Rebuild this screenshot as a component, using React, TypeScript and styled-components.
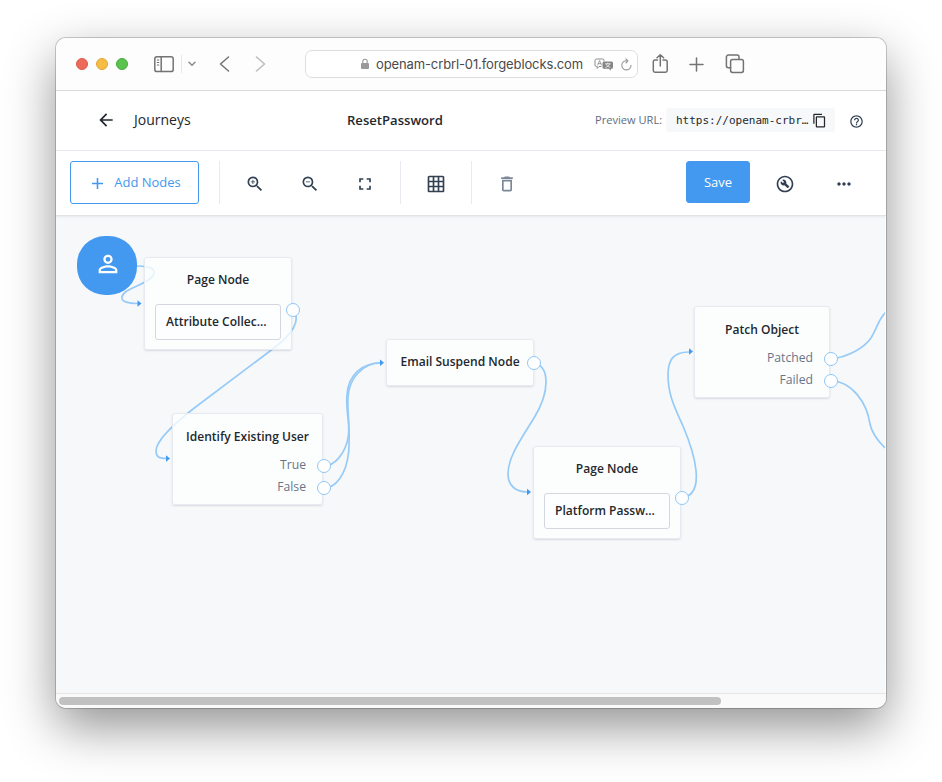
import React from 'react';
import styled, { createGlobalStyle } from 'styled-components';
import {
  MdAdd, MdArrowBack, MdContentCopy, MdDeleteOutline, MdFullscreen, MdGridOn,
  MdHelpOutline, MdMoreHoriz, MdOutlineBuildCircle, MdPersonOutline, MdZoomIn, MdZoomOut,
} from 'react-icons/md';

const GlobalStyle = createGlobalStyle`
  * { box-sizing: border-box; }
  html, body { margin: 0; background: #fff; }
  body { overflow: hidden; font-family: "Open Sans", "Noto Sans", sans-serif; color: #23282e; }
`;

const Desktop = styled.div`
  width: 942px;
  height: 782px;
  padding: 38px 56px 74px;
`;

const BrowserWindow = styled.main`
  display: flex;
  flex-direction: column;
  width: 830px;
  height: 670px;
  border-radius: 10px;
  overflow: hidden;
  background: #fff;
  box-shadow: 0 0 0 1px rgba(0, 0, 0, 0.19), 0 19px 50px rgba(0, 0, 0, 0.43);
`;

const TitleBar = styled.div`
  display: flex;
  align-items: center;
  flex: 0 0 53px;
  padding-left: 20px;
  background: #fdfdfd;
  border-bottom: 1px solid #d9d9d9;
`;

const Lights = styled.div`
  display: flex;
  gap: 8px;
  width: 78px;
`;

const Light = styled.span<{ $fill: string; $edge: string }>`
  width: 12px;
  height: 12px;
  border-radius: 50%;
  background: ${p => p.$fill};
  border: 1px solid ${p => p.$edge};
`;

const Glyph = styled.svg<{ $gap?: number; $color?: string }>`
  display: block;
  flex: none;
  margin-left: ${p => p.$gap ?? 0}px;
  fill: none;
  stroke: ${p => p.$color ?? '#737373'};
  stroke-width: 1.5;
  stroke-linecap: round;
  stroke-linejoin: round;
`;

const BarRule = styled.span`
  width: 1px;
  height: 18px;
  margin-left: 7px;
  background: #e9e9e9;
`;

const AddressField = styled.div`
  display: flex;
  align-items: center;
  width: 333px;
  height: 28px;
  margin-left: 39px;
  padding-left: 54px;
  border: 1px solid #dedede;
  border-radius: 7px;
  background: #fff;
`;

const Address = styled.span`
  width: 207px;
  margin-left: 6px;
  font: 13px/16px Inter, sans-serif;
  letter-spacing: -0.12px;
  color: #4a4a4a;
  white-space: nowrap;
`;

const Header = styled.header`
  display: flex;
  align-items: center;
  flex: 0 0 60px;
  padding: 0 0 2px 40px;
  border-bottom: 1px solid #e7eaf0;
  white-space: nowrap;
`;

const Crumb = styled.span`
  width: 213px;
  margin-left: 18px;
  font-size: 14px;
  line-height: 20px;
`;

const JourneyTitle = styled.h1`
  width: 248px;
  margin: 0;
  font-size: 13.1px;
  line-height: 20px;
  font-weight: 600;
`;

const PreviewLabel = styled.span`
  width: 71px;
  font-size: 11.1px;
  color: #5e6d82;
`;

const PreviewUrl = styled.div`
  display: flex;
  align-items: center;
  width: 169px;
  height: 24px;
  margin-top: 1px;
  padding-left: 10px;
  border-radius: 3px;
  background: #f6f8fa;
  font: 11px/23px "DejaVu Sans Mono", monospace;

  svg { margin-left: 4px; }
`;

const HelpIcon = styled(MdHelpOutline)`
  margin: 4px 0 0 14px;
  color: #324054;
`;

const Toolbar = styled.div`
  position: relative;
  z-index: 1;
  display: flex;
  align-items: flex-start;
  flex: 0 0 65px;
  padding: 10px 14px;
  border-bottom: 1px solid #e1e4e7;
  box-shadow: 0 1px 2px rgba(40, 50, 60, 0.08);
  background: #fff;
`;

const Button = styled.button<{ $primary?: boolean }>`
  display: flex;
  align-items: center;
  justify-content: center;
  gap: 7px;
  width: ${p => (p.$primary ? 64 : 129)}px;
  height: ${p => (p.$primary ? 42 : 43)}px;
  margin: 0;
  padding: 0 0 1px;
  border: 1px solid #4398ef;
  border-radius: 3px;
  background: ${p => (p.$primary ? '#4398ef' : '#fff')};
  color: ${p => (p.$primary ? '#fff' : '#4398ef')};
  font: 13px/20px "Open Sans", sans-serif;
  white-space: nowrap;

  svg { position: relative; top: 1px; }
`;

const ToolGroup = styled.div<{ $width: number; $gap?: number; $left?: number }>`
  display: flex;
  align-items: center;
  justify-content: center;
  gap: ${p => p.$gap ?? 0}px;
  width: ${p => p.$width}px;
  height: 43px;
  margin-left: ${p => p.$left ?? 0}px;
  padding-top: 2px;
  border-left: 1px solid #e7eaf0;
  color: #324054;
`;

const DeleteGroup = styled(ToolGroup)`
  margin-right: 145px;
  color: #7c8798;
`;

const Actions = styled.div`
  display: flex;
  align-items: center;
  gap: 39px;
  height: 43px;
  padding: 3px 0 0 25px;
  color: #324054;
`;

const Canvas = styled.section`
  position: relative;
  flex: 1;
  margin-right: 1px;
  overflow: hidden;
  background: #f6f8fa;
`;

const Edges = styled.svg`
  position: absolute;
  inset: 0;
  fill: none;
  stroke: #97cbf7;
  stroke-width: 1.7;
`;

const StartNode = styled.div`
  position: absolute;
  left: 21px;
  top: 20px;
  width: 60px;
  height: 59px;
  border-radius: 28px;
  display: flex;
  align-items: center;
  justify-content: center;
  padding: 0 0 4px 1px;
  background: #4398ef;
  color: #fff;
`;

const NodeCard = styled.article<{ $x: number; $y: number; $w: number; $h: number; $top: number }>`
  position: absolute;
  left: ${p => p.$x}px;
  top: ${p => p.$y}px;
  width: ${p => p.$w}px;
  height: ${p => p.$h}px;
  padding: ${p => p.$top}px 10px 0;
  border: 1px solid #e7ebf1;
  border-radius: 3px;
  background: rgba(254, 255, 255, 0.76);
  box-shadow: 0 1px 2px rgba(50, 64, 84, 0.16);
`;

const NodeTitle = styled.h2`
  margin: 0;
  font-size: 12.05px;
  line-height: 20px;
  font-weight: 600;
  text-align: center;
  white-space: nowrap;
`;

const InnerNode = styled.div`
  height: 36px;
  margin-top: 14px;
  padding-left: 10px;
  border: 1px solid #d3d8e0;
  border-radius: 3px;
  background: #fdfeff;
  font-size: 12.05px;
  line-height: 33px;
  font-weight: 600;
  white-space: nowrap;
`;

const Outcomes = styled.ul`
  margin: 7px 6px 0 0;
  padding: 0;
  list-style: none;
  font-size: 12.2px;
  line-height: 22px;
  text-align: right;
  color: #68748a;
`;

const Port = styled.span<{ $x: number; $y: number }>`
  position: absolute;
  left: ${p => p.$x - 7}px;
  top: ${p => p.$y - 7}px;
  width: 14px;
  height: 14px;
  border: 1px solid #8ec7f8;
  border-radius: 50%;
  background: #fff;
`;

const ScrollTrack = styled.div`
  flex: 0 0 15px;
  padding: 3px;
  border-top: 1px solid #e6e6e6;
  background: #fafafa;
`;

const ScrollThumb = styled.div`
  width: 662px;
  height: 8px;
  border-radius: 4px;
  background: #c1c1c1;
`;

type FlowNode = {
  title: string; x: number; y: number; w: number; h: number;
  inner?: string; outcomes?: string[];
};

const nodes: FlowNode[] = [
  { title: 'Page Node', x: 88, y: 41, w: 148, h: 93, inner: 'Attribute Collec...' },
  { title: 'Identify Existing User', x: 116, y: 197, w: 151, h: 92, outcomes: ['True', 'False'] },
  { title: 'Email Suspend Node', x: 330, y: 123, w: 148, h: 47 },
  { title: 'Page Node', x: 477, y: 230, w: 148, h: 93, inner: 'Platform Passw...' },
  { title: 'Patch Object', x: 638, y: 90, w: 136, h: 92, outcomes: ['Patched', 'Failed'] },
];

const ports = [
  [237, 94], [268, 250], [268, 272], [478, 147], [626, 282], [775, 143], [775, 165],
];

const edgePaths = [
  'M81 50 C95 50 103 54 95 62 C86 70 67 73 66 81 C65 86 73 87.500 82 87.500',
  'M237 94 C246 105 235 119 218 132 L137 193 C118 208 100 224 100 235 C100 241 103 242.500 111 242.500',
  'M268 250 C278 250 290 238 292.500 219 C294 205 289.500 195 291 179 C292 158 307 147 325 146.500',
  'M268 272 C279 272 290 260 292.700 236 C294.500 208 291 197 292 181 C293 163 306 147 325 147',
  'M478 147 C493 150 495 174 478 202 C465 223 452 241 452 258 C452 270 460 276 472 276',
  'M626 282 C651 278 638 236 627 210 C618 190 612 178 612 159 C612 144 617 136 633 136',
  'M775 143 C792 141 808 132 815 122 C822 110 822 104 830 96',
  'M775 165 C796 165 811 187 814 208 C816 218 822 225 829 232',
];

const arrowTips = [[85.5, 87.5], [114, 242.5], [328, 146.7], [475, 276], [637, 135.5]];

const App = () => (
  <Desktop>
    <GlobalStyle />
    <BrowserWindow>
      <TitleBar>
        <Lights>
          <Light $fill="#ed6a5a" $edge="#dc5b4c" />
          <Light $fill="#f5bd43" $edge="#dfa536" />
          <Light $fill="#5ac24e" $edge="#47ab3c" />
        </Lights>
        <Glyph width="20" height="18" viewBox="0 0 20 18" aria-label="Sidebar">
          <rect x="0.800" y="1.800" width="18.400" height="14.800" rx="2.200" />
          <path d="M7.200 2v14.500" />
          <path d="M3.300 5h1.500M3.300 7.500h1.500M3.300 10h1.500" strokeWidth="1" />
        </Glyph>
        <BarRule />
        <Glyph $gap={6} $color="#8c8c8c" width="8" height="6" viewBox="0 0 8 6"><path d="M1 1.300l3 3 3-3" /></Glyph>
        <Glyph $gap={23} width="11" height="17" viewBox="0 0 11 17"><path d="M9.500 1L1.500 8l8 7" /></Glyph>
        <Glyph $gap={25} $color="#bcbcbc" width="11" height="17" viewBox="0 0 11 17"><path d="M1.500 1l8 7-8 7" /></Glyph>
        <AddressField>
          <Glyph $color="#999" width="10" height="12" viewBox="0 0 10 12">
            <rect x="1" y="5" width="8" height="6" rx="1" fill="#999" stroke="none" />
            <path d="M2.800 5V3.500a2.200 2.200 0 014.400 0V5" strokeWidth="1.100" />
          </Glyph>
          <Address>openam-crbrl-01.forgeblocks.com</Address>
          <Glyph $gap={11} $color="#8b8b8b" width="20" height="13" viewBox="0 0 20 13" aria-label="Translate">
            <path d="M7 8.500H5L3.200 10.500V8.500H2.500A1.500 1.500 0 011 7V2.500A1.500 1.500 0 012.500 1H8.500A1.500 1.500 0 0110 2.500V3" strokeWidth="1" />
            <path d="M3.700 7l1.900-4.500L7.400 7M4.300 5.600h2.500" strokeWidth="0.800" />
            <path d="M10 3.500h7.500A1.500 1.500 0 0119 5v4.300a1.500 1.500 0 01-1.500 1.500h-.7v2l-2-2H10a1.500 1.500 0 01-1.500-1.500V5A1.500 1.500 0 0110 3.500z" fill="#858585" stroke="none" />
            <path d="M11.300 5.800h5M13.800 5v.8M15.600 6c-.6 1.800-2 2.800-3.900 3.400M12.200 6.300c.7 1.600 2 2.500 3.800 3" stroke="#fff" strokeWidth="0.700" />
          </Glyph>
          <Glyph $gap={6} $color="#999" width="13" height="13" viewBox="0 0 13 13" aria-label="Reload">
            <path d="M11 7.200a4.600 4.600 0 11-4.400-4.500h1.200M5.800.8L8 2.800 5.900 5" strokeWidth="1.100" />
          </Glyph>
        </AddressField>
        <Glyph $gap={14} width="17" height="21" viewBox="0 0 17 21" aria-label="Share">
          <path d="M5.500 6H3a1.700 1.700 0 00-1.700 1.700v8.800A1.700 1.700 0 003 18.200h10.500a1.700 1.700 0 001.700-1.700V7.700A1.700 1.700 0 0013.500 6H11M8.300 12V.8M5 3.800L8.300.800l3.300 3" />
        </Glyph>
        <Glyph $gap={20} width="15" height="15" viewBox="0 0 15 15" aria-label="New tab"><path d="M7.500 1v13M1 7.500h13" /></Glyph>
        <Glyph $gap={21} width="20" height="20" viewBox="0 0 20 20" aria-label="Tabs">
          <path d="M14 5V3a1.900 1.900 0 00-1.900-1.900H3.300A1.900 1.900 0 001.400 3v8.800a1.900 1.900 0 001.900 1.900h2.300" />
          <rect x="5.600" y="5.600" width="12.800" height="12.800" rx="1.900" />
        </Glyph>
      </TitleBar>

      <Header>
        <MdArrowBack size={20} />
        <Crumb>Journeys</Crumb>
        <JourneyTitle>ResetPassword</JourneyTitle>
        <PreviewLabel>Preview URL:</PreviewLabel>
        <PreviewUrl>https://openam-crbr…<MdContentCopy size={15} /></PreviewUrl>
        <HelpIcon size={15} />
      </Header>

      <Toolbar>
        <Button><MdAdd size={19} />Add Nodes</Button>
        <ToolGroup $width={181} $gap={35} $left={20}>
          <MdZoomIn size={20} /><MdZoomOut size={20} /><MdFullscreen size={20} />
        </ToolGroup>
        <ToolGroup $width={71}><MdGridOn size={20} /></ToolGroup>
        <DeleteGroup $width={70}><MdDeleteOutline size={20} /></DeleteGroup>
        <Button $primary>Save</Button>
        <Actions><MdOutlineBuildCircle size={20} /><MdMoreHoriz size={20} /></Actions>
      </Toolbar>

      <Canvas>
        <Edges width="830" height="477" viewBox="0 0 830 477">
          {edgePaths.map(d => <path key={d} d={d} />)}
          {arrowTips.map(([x, y]) => (
            <path key={`${x}-${y}`} d={`M${x} ${y}l-4-3.200v6.400z`} fill="#4398ef" stroke="none" />
          ))}
        </Edges>
        <StartNode><MdPersonOutline size={28} /></StartNode>
        {nodes.map(n => (
          <NodeCard key={`${n.x}-${n.y}`} $x={n.x} $y={n.y} $w={n.w} $h={n.h} $top={n.outcomes ? 13 : 12}>
            <NodeTitle>{n.title}</NodeTitle>
            {n.inner && <InnerNode>{n.inner}</InnerNode>}
            {n.outcomes && <Outcomes>{n.outcomes.map(o => <li key={o}>{o}</li>)}</Outcomes>}
          </NodeCard>
        ))}
        {ports.map(([x, y]) => <Port key={`${x}-${y}`} $x={x} $y={y} />)}
      </Canvas>
      <ScrollTrack><ScrollThumb /></ScrollTrack>
    </BrowserWindow>
  </Desktop>
);

export default App;
